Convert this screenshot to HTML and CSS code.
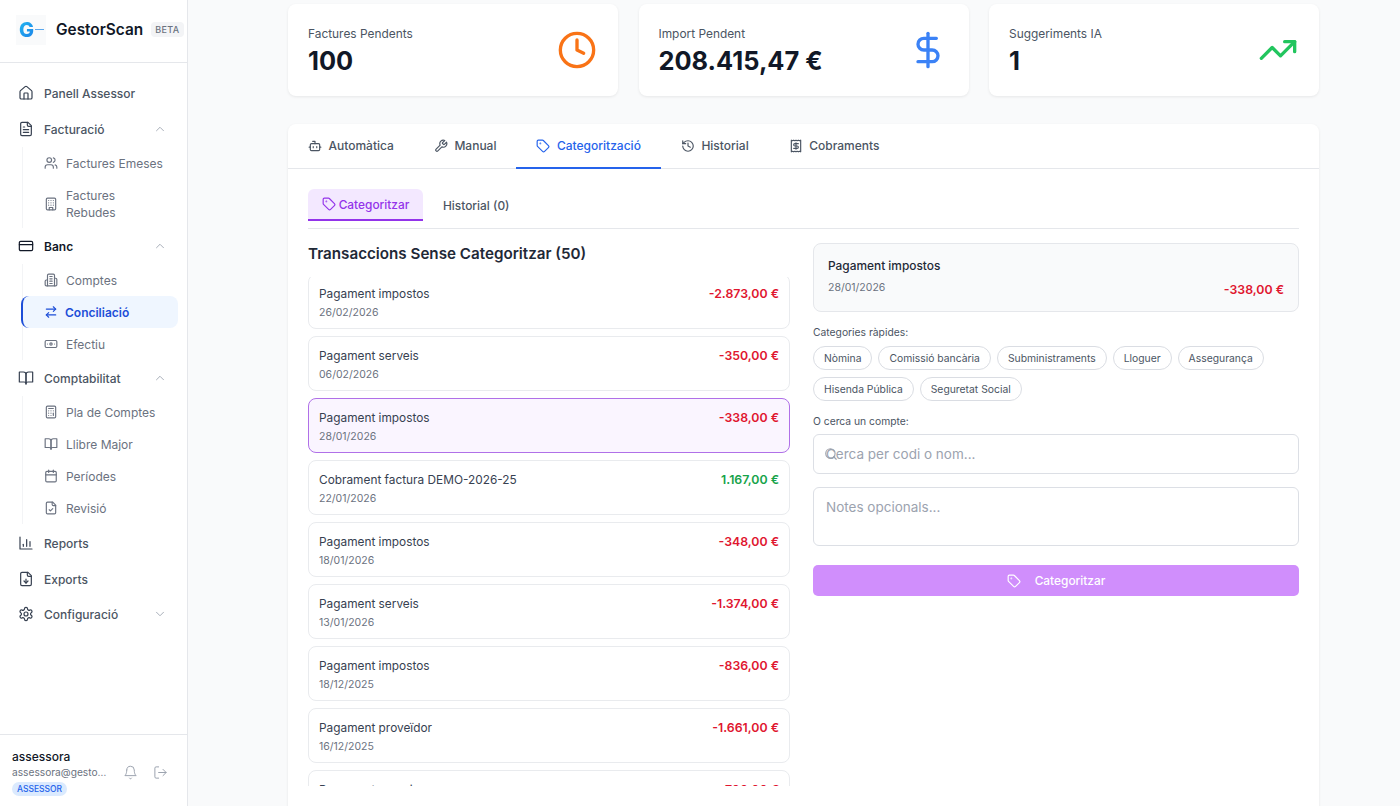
FILE: index.html
```html
<!DOCTYPE html>
<html>

<head>
    <meta http-equiv="Content-Type" content="text/html; charset=utf-8" />
    <title>GestorScan</title>
    <link rel="stylesheet" href="styles.css">
</head>

<body>
    <!-- Icon sprite -->
    <svg class="sprite" xmlns="http://www.w3.org/2000/svg">
        <symbol id="i-house" viewBox="0 0 24 24"><path d="M15 21v-8a1 1 0 0 0-1-1h-4a1 1 0 0 0-1 1v8"/><path d="M3 10a2 2 0 0 1 .709-1.528l7-5.999a2 2 0 0 1 2.582 0l7 5.999A2 2 0 0 1 21 10v9a2 2 0 0 1-2 2H5a2 2 0 0 1-2-2z"/></symbol>
        <symbol id="i-file" viewBox="0 0 24 24"><path d="M15 2H6a2 2 0 0 0-2 2v16a2 2 0 0 0 2 2h12a2 2 0 0 0 2-2V7Z"/><path d="M14 2v4a2 2 0 0 0 2 2h4"/><path d="M10 9H8"/><path d="M16 13H8"/><path d="M16 17H8"/></symbol>
        <symbol id="i-up" viewBox="0 0 24 24"><path d="m18 15-6-6-6 6"/></symbol>
        <symbol id="i-down" viewBox="0 0 24 24"><path d="m6 9 6 6 6-6"/></symbol>
        <symbol id="i-users" viewBox="0 0 24 24"><path d="M16 21v-2a4 4 0 0 0-4-4H6a4 4 0 0 0-4 4v2"/><circle cx="9" cy="7" r="4"/><path d="M22 21v-2a4 4 0 0 0-3-3.87"/><path d="M16 3.13a4 4 0 0 1 0 7.75"/></symbol>
        <symbol id="i-building" viewBox="0 0 24 24"><rect x="4" y="2" width="16" height="20" rx="2"/><path d="M9 22v-4h6v4"/><path d="M8 6h.01M12 6h.01M16 6h.01M8 10h.01M12 10h.01M16 10h.01M8 14h.01M12 14h.01M16 14h.01"/></symbol>
        <symbol id="i-card" viewBox="0 0 24 24"><rect x="2" y="5" width="20" height="14" rx="2"/><path d="M2 10h20"/></symbol>
        <symbol id="i-building2" viewBox="0 0 24 24"><path d="M6 22V4a2 2 0 0 1 2-2h8a2 2 0 0 1 2 2v18Z"/><path d="M6 12H4a2 2 0 0 0-2 2v6a2 2 0 0 0 2 2h2"/><path d="M18 9h2a2 2 0 0 1 2 2v9a2 2 0 0 1-2 2h-2"/><path d="M10 6h4M10 10h4M10 14h4M10 18h4"/></symbol>
        <symbol id="i-swap" viewBox="0 0 24 24"><path d="m16 3 4 4-4 4"/><path d="M20 7H4"/><path d="m8 21-4-4 4-4"/><path d="M4 17h16"/></symbol>
        <symbol id="i-banknote" viewBox="0 0 24 24"><rect x="2" y="6" width="20" height="12" rx="2"/><circle cx="12" cy="12" r="2"/><path d="M6 12h.01M18 12h.01"/></symbol>
        <symbol id="i-book" viewBox="0 0 24 24"><path d="M2 3h6a4 4 0 0 1 4 4v14a3 3 0 0 0-3-3H2z"/><path d="M22 3h-6a4 4 0 0 0-4 4v14a3 3 0 0 1 3-3h7z"/></symbol>
        <symbol id="i-calc" viewBox="0 0 24 24"><rect x="4" y="2" width="16" height="20" rx="2"/><path d="M8 6h8"/><path d="M16 14v4"/><path d="M16 10h.01M12 10h.01M8 10h.01M12 14h.01M8 14h.01M12 18h.01M8 18h.01"/></symbol>
        <symbol id="i-calendar" viewBox="0 0 24 24"><path d="M8 2v4"/><path d="M16 2v4"/><rect x="3" y="4" width="18" height="18" rx="2"/><path d="M3 10h18"/></symbol>
        <symbol id="i-filecheck" viewBox="0 0 24 24"><path d="M15 2H6a2 2 0 0 0-2 2v16a2 2 0 0 0 2 2h12a2 2 0 0 0 2-2V7Z"/><path d="M14 2v4a2 2 0 0 0 2 2h4"/><path d="m9 15 2 2 4-4"/></symbol>
        <symbol id="i-chart" viewBox="0 0 24 24"><path d="M3 3v18h18"/><path d="M8 17v-3"/><path d="M13 17V7"/><path d="M18 17v-7"/></symbol>
        <symbol id="i-filedown" viewBox="0 0 24 24"><path d="M15 2H6a2 2 0 0 0-2 2v16a2 2 0 0 0 2 2h12a2 2 0 0 0 2-2V7Z"/><path d="M14 2v4a2 2 0 0 0 2 2h4"/><path d="M12 18v-6"/><path d="m9 15 3 3 3-3"/></symbol>
        <symbol id="i-gear" viewBox="0 0 24 24"><path d="M12.22 2h-.44a2 2 0 0 0-2 2v.18a2 2 0 0 1-1 1.73l-.43.25a2 2 0 0 1-2 0l-.15-.08a2 2 0 0 0-2.73.73l-.22.38a2 2 0 0 0 .73 2.73l.15.1a2 2 0 0 1 1 1.72v.51a2 2 0 0 1-1 1.74l-.15.09a2 2 0 0 0-.73 2.73l.22.38a2 2 0 0 0 2.73.73l.15-.08a2 2 0 0 1 2 0l.43.25a2 2 0 0 1 1 1.73V20a2 2 0 0 0 2 2h.44a2 2 0 0 0 2-2v-.18a2 2 0 0 1 1-1.73l.43-.25a2 2 0 0 1 2 0l.15.08a2 2 0 0 0 2.73-.73l.22-.39a2 2 0 0 0-.73-2.73l-.15-.08a2 2 0 0 1-1-1.74v-.5a2 2 0 0 1 1-1.74l.15-.09a2 2 0 0 0 .73-2.73l-.22-.38a2 2 0 0 0-2.73-.73l-.15.08a2 2 0 0 1-2 0l-.43-.25a2 2 0 0 1-1-1.73V4a2 2 0 0 0-2-2z"/><circle cx="12" cy="12" r="3"/></symbol>
        <symbol id="i-bell" viewBox="0 0 24 24"><path d="M6 8a6 6 0 0 1 12 0c0 7 3 9 3 9H3s3-2 3-9"/><path d="M10.3 21a1.94 1.94 0 0 0 3.4 0"/></symbol>
        <symbol id="i-logout" viewBox="0 0 24 24"><path d="M9 21H5a2 2 0 0 1-2-2V5a2 2 0 0 1 2-2h4"/><path d="m16 17 5-5-5-5"/><path d="M21 12H9"/></symbol>
        <symbol id="i-clock" viewBox="0 0 24 24"><circle cx="12" cy="12" r="10"/><path d="M12 6v6l4 2"/></symbol>
        <symbol id="i-dollar" viewBox="0 0 24 24"><path d="M12 2v20"/><path d="M17 5H9.5a3.5 3.5 0 0 0 0 7h5a3.5 3.5 0 0 1 0 7H6"/></symbol>
        <symbol id="i-trend" viewBox="0 0 24 24"><path d="M22 7 13.5 15.5 8.5 10.5 2 17"/><path d="M16 7h6v6"/></symbol>
        <symbol id="i-bot" viewBox="0 0 24 24"><path d="M12 8V4H8"/><rect x="4" y="8" width="16" height="12" rx="2"/><path d="M2 14h2M20 14h2M15 13v2M9 13v2"/></symbol>
        <symbol id="i-wrench" viewBox="0 0 24 24"><path d="M14.7 6.3a1 1 0 0 0 0 1.4l1.6 1.6a1 1 0 0 0 1.4 0l3.77-3.77a6 6 0 0 1-7.94 7.94l-6.91 6.91a2.12 2.12 0 0 1-3-3l6.91-6.91a6 6 0 0 1 7.94-7.94l-3.76 3.76z"/></symbol>
        <symbol id="i-tag" viewBox="0 0 24 24"><path d="M12.586 2.586A2 2 0 0 0 11.172 2H4a2 2 0 0 0-2 2v7.172a2 2 0 0 0 .586 1.414l8.704 8.704a2.426 2.426 0 0 0 3.42 0l6.58-6.58a2.426 2.426 0 0 0 0-3.42z"/><circle cx="7.5" cy="7.5" r=".5"/></symbol>
        <symbol id="i-history" viewBox="0 0 24 24"><path d="M3 12a9 9 0 1 0 9-9 9.75 9.75 0 0 0-6.74 2.74L3 8"/><path d="M3 3v5h5"/><path d="M12 7v5l4 2"/></symbol>
        <symbol id="i-receipt" viewBox="0 0 24 24"><path d="M4 2v20l2-1 2 1 2-1 2 1 2-1 2 1 2-1 2 1V2l-2 1-2-1-2 1-2-1-2 1-2-1-2 1Z"/><path d="M16 8h-6a2 2 0 1 0 0 4h4a2 2 0 1 1 0 4H8"/><path d="M12 17.5v-11"/></symbol>
        <symbol id="i-search" viewBox="0 0 24 24"><circle cx="11" cy="11" r="8"/><path d="m21 21-4.3-4.3"/></symbol>
    </svg>

    <aside class="sidebar">
        <div class="brand">
            <div class="logo"><span class="logo-g">G</span><span class="logo-dash"></span></div>
            <span class="brand-name">GestorScan</span>
            <span class="brand-beta">BETA</span>
        </div>

        <nav class="nav">
            <a class="nav-item"><svg class="icon"><use href="#i-house"/></svg><span>Panell Assessor</span></a>

            <a class="nav-item"><svg class="icon"><use href="#i-file"/></svg><span>Facturació</span><svg class="chev"><use href="#i-up"/></svg></a>
            <div class="nav-sub">
                <a class="sub-item"><svg class="icon-sm"><use href="#i-users"/></svg><span>Factures Emeses</span></a>
                <a class="sub-item sub-tall"><svg class="icon-sm"><use href="#i-building"/></svg><span>Factures<br>Rebudes</span></a>
            </div>

            <a class="nav-item nav-strong"><svg class="icon"><use href="#i-card"/></svg><span>Banc</span><svg class="chev"><use href="#i-up"/></svg></a>
            <div class="nav-sub">
                <a class="sub-item"><svg class="icon-sm"><use href="#i-building2"/></svg><span>Comptes</span></a>
                <a class="sub-item active"><svg class="icon-sm"><use href="#i-swap"/></svg><span>Conciliació</span></a>
                <a class="sub-item"><svg class="icon-sm"><use href="#i-banknote"/></svg><span>Efectiu</span></a>
            </div>

            <a class="nav-item"><svg class="icon"><use href="#i-book"/></svg><span>Comptabilitat</span><svg class="chev"><use href="#i-up"/></svg></a>
            <div class="nav-sub">
                <a class="sub-item"><svg class="icon-sm"><use href="#i-calc"/></svg><span>Pla de Comptes</span></a>
                <a class="sub-item"><svg class="icon-sm"><use href="#i-book"/></svg><span>Llibre Major</span></a>
                <a class="sub-item"><svg class="icon-sm"><use href="#i-calendar"/></svg><span>Períodes</span></a>
                <a class="sub-item"><svg class="icon-sm"><use href="#i-filecheck"/></svg><span>Revisió</span></a>
            </div>

            <a class="nav-item"><svg class="icon"><use href="#i-chart"/></svg><span>Reports</span></a>
            <a class="nav-item"><svg class="icon"><use href="#i-filedown"/></svg><span>Exports</span></a>
            <a class="nav-item nav-last"><svg class="icon"><use href="#i-gear"/></svg><span>Configuració</span><svg class="chev"><use href="#i-down"/></svg></a>
        </nav>

        <div class="user">
            <div class="user-info">
                <div class="user-name">assessora</div>
                <div class="user-mail">assessora@gestorscan.cat</div>
                <span class="user-role">ASSESSOR</span>
            </div>
            <svg class="user-btn"><use href="#i-bell"/></svg>
            <svg class="user-btn"><use href="#i-logout"/></svg>
        </div>
    </aside>

    <main class="main">
        <div class="stats">
            <div class="stat">
                <div>
                    <div class="stat-label">Factures Pendents</div>
                    <div class="stat-value">100</div>
                </div>
                <svg class="stat-icon orange"><use href="#i-clock"/></svg>
            </div>
            <div class="stat">
                <div>
                    <div class="stat-label">Import Pendent</div>
                    <div class="stat-value">208.415,47 €</div>
                </div>
                <svg class="stat-icon blue"><use href="#i-dollar"/></svg>
            </div>
            <div class="stat">
                <div>
                    <div class="stat-label">Suggeriments IA</div>
                    <div class="stat-value">1</div>
                </div>
                <svg class="stat-icon green"><use href="#i-trend"/></svg>
            </div>
        </div>

        <section class="panel">
            <div class="tabs">
                <a class="tab"><svg class="icon-sm"><use href="#i-bot"/></svg>Automàtica</a>
                <a class="tab"><svg class="icon-sm"><use href="#i-wrench"/></svg>Manual</a>
                <a class="tab active"><svg class="icon-sm"><use href="#i-tag"/></svg>Categorització</a>
                <a class="tab"><svg class="icon-sm"><use href="#i-history"/></svg>Historial</a>
                <a class="tab"><svg class="icon-sm"><use href="#i-receipt"/></svg>Cobraments</a>
            </div>

            <div class="panel-body">
                <div class="subtabs">
                    <a class="subtab active"><svg class="icon-sm"><use href="#i-tag"/></svg>Categoritzar</a>
                    <a class="subtab">Historial (0)</a>
                </div>

                <div class="columns">
                    <div class="col-left">
                        <h2 class="list-title">Transaccions Sense Categoritzar (50)</h2>
                        <div class="tx-scroll">
                            <div class="tx-list">
                                <div class="tx"><div><div class="tx-name">Pagament impostos</div><div class="tx-date">26/02/2026</div></div><div class="tx-amount neg">-2.873,00 €</div></div>
                                <div class="tx"><div><div class="tx-name">Pagament serveis</div><div class="tx-date">06/02/2026</div></div><div class="tx-amount neg">-350,00 €</div></div>
                                <div class="tx selected"><div><div class="tx-name">Pagament impostos</div><div class="tx-date">28/01/2026</div></div><div class="tx-amount neg">-338,00 €</div></div>
                                <div class="tx"><div><div class="tx-name">Cobrament factura DEMO-2026-25</div><div class="tx-date">22/01/2026</div></div><div class="tx-amount pos">1.167,00 €</div></div>
                                <div class="tx"><div><div class="tx-name">Pagament impostos</div><div class="tx-date">18/01/2026</div></div><div class="tx-amount neg">-348,00 €</div></div>
                                <div class="tx"><div><div class="tx-name">Pagament serveis</div><div class="tx-date">13/01/2026</div></div><div class="tx-amount neg">-1.374,00 €</div></div>
                                <div class="tx"><div><div class="tx-name">Pagament impostos</div><div class="tx-date">18/12/2025</div></div><div class="tx-amount neg">-836,00 €</div></div>
                                <div class="tx"><div><div class="tx-name">Pagament proveïdor</div><div class="tx-date">16/12/2025</div></div><div class="tx-amount neg">-1.661,00 €</div></div>
                                <div class="tx"><div><div class="tx-name">Pagament serveis</div><div class="tx-date">10/12/2025</div></div><div class="tx-amount neg">-700,00 €</div></div>
                            </div>
                        </div>
                    </div>

                    <div class="col-right">
                        <div class="summary">
                            <div>
                                <div class="summary-name">Pagament impostos</div>
                                <div class="summary-date">28/01/2026</div>
                            </div>
                            <div class="summary-amount">-338,00 €</div>
                        </div>

                        <div class="field-label">Categories ràpides:</div>
                        <div class="chips">
                            <button class="chip">Nòmina</button>
                            <button class="chip">Comissió bancària</button>
                            <button class="chip">Subministraments</button>
                            <button class="chip">Lloguer</button>
                            <button class="chip">Assegurança</button>
                            <button class="chip">Hisenda Pública</button>
                            <button class="chip">Seguretat Social</button>
                        </div>

                        <div class="field-label">O cerca un compte:</div>
                        <div class="search">
                            <svg class="search-icon"><use href="#i-search"/></svg>
                            <input class="input" type="text" placeholder="Cerca per codi o nom...">
                        </div>
                        <textarea class="notes" placeholder="Notes opcionals..."></textarea>
                        <button class="submit"><svg class="icon-sm"><use href="#i-tag"/></svg>Categoritzar</button>
                    </div>
                </div>
            </div>
        </section>
    </main>
</body>

</html>
```

FILE: styles.css
```css
* {
    box-sizing: border-box;
}

html,
body {
    margin: 0;
    height: 100%;
    overflow: hidden;
}

body {
    display: flex;
    background-color: #f9fafb;
    color: #111827;
    font-family: "Inter", "Liberation Sans", sans-serif;
}

.sprite {
    display: none;
}

.icon,
.icon-sm,
.chev,
.user-btn,
.stat-icon,
.search-icon {
    fill: none;
    stroke: currentColor;
    stroke-width: 2;
    stroke-linecap: round;
    stroke-linejoin: round;
    flex-shrink: 0;
}

.icon {
    width: 16px;
    height: 16px;
    stroke-width: 1.8;
}

.icon-sm {
    width: 14px;
    height: 14px;
}

/* Sidebar */
.sidebar {
    width: 188px;
    flex-shrink: 0;
    height: 100%;
    display: flex;
    flex-direction: column;
    background-color: #ffffff;
    border-right: 1px solid #e5e7eb;
}

.brand {
    height: 63px;
    display: flex;
    align-items: center;
    padding: 0 0 3px 16px;
    border-bottom: 1px solid #e5e7eb;
}

.logo {
    width: 30px;
    height: 30px;
    margin-right: 10px;
    display: flex;
    align-items: center;
    padding-left: 3px;
    background-color: #f9fafb;
}

.logo-g {
    font-size: 20px;
    font-weight: 800;
    line-height: 1;
    background: linear-gradient(135deg, #22b8f0, #1d7fe8);
    -webkit-background-clip: text;
    background-clip: text;
    color: transparent;
}

.logo-dash {
    width: 9px;
    height: 1px;
    margin-left: 1px;
    background-color: #5aa8ee;
}

.brand-name {
    font-size: 15.4px;
    font-weight: 600;
    color: #111827;
}

.brand-beta {
    margin-left: 8px;
    padding: 2px 4px;
    border-radius: 4px;
    background-color: #f3f4f6;
    color: #6b7280;
    font-size: 9px;
    font-weight: 500;
    letter-spacing: 0.4px;
}

.nav {
    flex: 1;
    padding-top: 12px;
}

.nav-item {
    height: 36px;
    display: flex;
    align-items: center;
    gap: 10px;
    padding: 0 20px 0 18px;
    color: #4b5563;
    font-size: 12px;
    font-weight: 500;
}

.nav-item .icon {
    color: #374151;
}

.nav-strong {
    color: #111827;
    font-weight: 600;
}

.nav-strong .icon {
    color: #111827;
}

.nav-last {
    margin-top: -1px;
}

.chev {
    width: 14px;
    height: 14px;
    margin-left: auto;
    color: #9ca3af;
    stroke-width: 1.5;
}

.nav-sub {
    margin: 0 9px 0 22px;
    border-left: 1px solid #f3f4f6;
}

.nav-sub:last-of-type {
    margin-bottom: 1px;
}

.sub-item {
    height: 32px;
    display: flex;
    align-items: center;
    gap: 8px;
    padding-left: 21px;
    color: #6b7280;
    font-size: 12px;
    font-weight: 400;
    line-height: 17px;
}

.sub-tall {
    height: 49px;
}

.sub-item.active {
    margin-left: -2px;
    gap: 7px;
    border-left: 2px solid #1d4ed8;
    border-radius: 8px;
    background-color: #eff6ff;
    color: #1d4ed8;
    font-weight: 600;
}

.user {
    height: 72px;
    display: flex;
    align-items: flex-start;
    padding: 14px 20px 0 12px;
    border-top: 1px solid #e5e7eb;
}

.user-info {
    width: 95px;
    margin-right: 16px;
}

.user-name {
    font-size: 12px;
    font-weight: 500;
    color: #111827;
    line-height: 16px;
}

.user-mail {
    font-size: 10.2px;
    color: #6b7280;
    line-height: 15px;
    white-space: nowrap;
    overflow: hidden;
    text-overflow: ellipsis;
}

.user-role {
    display: block;
    width: fit-content;
    margin-top: 2px;
    padding: 0 5px;
    border-radius: 7px;
    background-color: #dbeafe;
    color: #2563eb;
    font-size: 8.5px;
    font-weight: 500;
    line-height: 14px;
}

.user-btn {
    width: 15px;
    height: 15px;
    margin: 16px 15px 0 0;
    color: #9ca3af;
    stroke-width: 1.6;
}

.user-btn:last-child {
    margin-right: 0;
}

/* Main */
.main {
    flex: 1;
    min-width: 0;
    height: 100%;
    padding: 4px 81px 0 100px;
}

.stats {
    display: grid;
    grid-template-columns: repeat(3, 1fr);
    gap: 20.5px;
    margin-bottom: 28px;
}

.stat {
    height: 92px;
    display: flex;
    align-items: center;
    justify-content: space-between;
    padding: 0 21px 0 20px;
    background-color: #ffffff;
    border-radius: 8px;
    box-shadow: 0 1px 3px rgba(0, 0, 0, 0.08);
}

.stat-label {
    font-size: 11.9px;
    color: #4b5563;
    line-height: 20px;
    margin-bottom: 1px;
}

.stat-value {
    font-size: 25.4px;
    font-weight: 700;
    color: #111827;
    line-height: 32px;
}

.stat-icon {
    width: 40px;
    height: 40px;
}

.orange {
    color: #f97316;
}

.blue {
    color: #3b82f6;
}

.green {
    color: #22c55e;
}

.panel {
    height: 700px;
    background-color: #ffffff;
    border-radius: 8px;
    box-shadow: 0 1px 3px rgba(0, 0, 0, 0.08);
}

.tabs {
    height: 45px;
    display: flex;
    border-bottom: 1px solid #e5e7eb;
}

.tab {
    height: 45px;
    display: flex;
    align-items: center;
    gap: 6.5px;
    padding: 0 20px 2px;
    color: #4b5563;
    font-size: 12px;
    font-weight: 500;
}

.tab.active {
    color: #2563eb;
    border-bottom: 2px solid #2563eb;
    padding-bottom: 0;
}

.panel-body {
    padding: 20px 20px 0;
}

.subtabs {
    height: 40px;
    display: flex;
    gap: 20px;
    border-bottom: 1px solid #e5e7eb;
}

.subtab {
    height: 32px;
    display: flex;
    align-items: center;
    gap: 3px;
    color: #4b5563;
    font-size: 11.9px;
    font-weight: 500;
}

.subtab.active {
    width: 115px;
    justify-content: center;
    background-color: #f3e8ff;
    border-bottom: 2px solid #9333ea;
    border-radius: 6px 6px 0 0;
    color: #9333ea;
}

.columns {
    display: grid;
    grid-template-columns: 482px 486px;
    gap: 23px;
    margin-top: 14px;
}

.list-title {
    margin: 0 0 12px;
    font-size: 15.2px;
    font-weight: 600;
    line-height: 22px;
    color: #1f2937;
}

.tx-scroll {
    height: 509px;
    overflow: hidden;
}

.tx-list {
    margin-top: -3px;
    display: flex;
    flex-direction: column;
    gap: 7px;
}

.tx {
    height: 55px;
    flex-shrink: 0;
    display: flex;
    justify-content: space-between;
    padding: 11px 10px 0 10px;
    background-color: #ffffff;
    border: 1px solid #e9ebee;
    border-radius: 8px;
}

.tx.selected {
    background-color: #faf5ff;
    border-color: #b070e8;
}

.tx-name {
    font-size: 11.85px;
    color: #374151;
    line-height: 16px;
    margin-bottom: 3px;
}

.tx-date {
    font-size: 10.5px;
    color: #6b7280;
    line-height: 15px;
}

.tx-amount {
    font-size: 12.3px;
    font-weight: 600;
    line-height: 16px;
}

.neg {
    color: #e0162f;
}

.pos {
    color: #16a34a;
}

.summary {
    height: 69px;
    display: flex;
    justify-content: space-between;
    padding: 14px 14px 0 14px;
    background-color: #f9fafb;
    border: 1px solid #e5e7eb;
    border-radius: 8px;
}

.summary-name {
    font-size: 11.9px;
    font-weight: 500;
    color: #1f2937;
    line-height: 16px;
    margin-bottom: 6px;
}

.summary-date {
    font-size: 10.5px;
    color: #6b7280;
    line-height: 15px;
}

.summary-amount {
    align-self: flex-end;
    margin-bottom: 13px;
    font-size: 12.3px;
    font-weight: 600;
    line-height: 16px;
    color: #e0162f;
}

.field-label {
    margin-top: 13px;
    font-size: 10.3px;
    color: #4b5563;
    line-height: 14px;
}

.chips {
    display: flex;
    flex-wrap: wrap;
    gap: 7px 6px;
    margin-top: 7px;
}

.chip {
    height: 24px;
    padding: 0 10px;
    background-color: #ffffff;
    border: 1px solid #dadde3;
    border-radius: 12px;
    color: #4b5563;
    font-family: inherit;
    font-size: 10.35px;
}

.search {
    position: relative;
    margin-top: 6px;
}

.search-icon {
    position: absolute;
    left: 11px;
    top: 13px;
    width: 14px;
    height: 14px;
    color: #9ca3af;
}

.input,
.notes {
    display: block;
    width: 100%;
    padding: 0 12px;
    background-color: #ffffff;
    border: 1px solid #dcdfe5;
    border-radius: 6px;
    color: #111827;
    font-family: inherit;
    font-size: 13.5px;
}

.input {
    height: 40px;
}

.notes {
    height: 59px;
    margin-top: 13px;
    padding-top: 11px;
    resize: none;
}

.input::placeholder,
.notes::placeholder {
    color: #9ca3af;
    opacity: 1;
}

.submit {
    width: 100%;
    height: 31px;
    margin-top: 19px;
    display: flex;
    align-items: center;
    justify-content: center;
    gap: 14px;
    background-color: #d08efc;
    border: none;
    border-radius: 5px;
    color: #ffffff;
    font-family: inherit;
    font-size: 11.9px;
    font-weight: 500;
}
```
